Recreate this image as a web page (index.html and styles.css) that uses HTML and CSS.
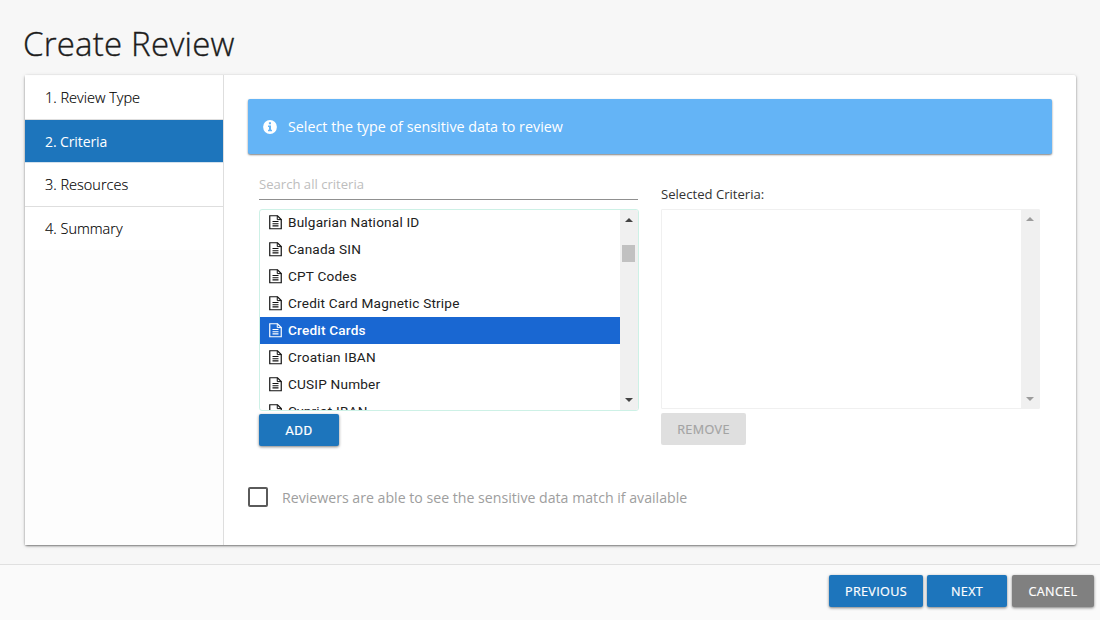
FILE: index.html
```
<!DOCTYPE html>
<html lang="en">
<head>
<meta charset="utf-8">
<title>Create Review</title>
<link rel="stylesheet" href="styles.css">
</head>
<body>
<svg class="defs" width="0" height="0" aria-hidden="true">
  <symbol id="doc" viewBox="0 0 13 15">
    <path d="M.75.75H8.5L12.25 4.5V13.75H.75Z" fill="none" stroke="currentColor" stroke-width="1.2"/>
    <path d="M8.25.75V4.6H12.25" fill="none" stroke="currentColor" stroke-width="1"/>
    <path d="M3.5 6.5H9.5M3.5 8.7H9.5M3.5 10.9H9.5" stroke="currentColor" stroke-width="1.1"/>
  </symbol>
</svg>
<main class="page">
  <h1 class="title"><span>Create Review</span></h1>
  <section class="card">
    <nav class="steps">
      <a class="step"><span>1. Review Type</span></a>
      <a class="step active"><span>2. Criteria</span></a>
      <a class="step"><span>3. Resources</span></a>
      <a class="step last"><span>4. Summary</span></a>
    </nav>
    <div class="content">
      <div class="banner">
        <svg class="info" viewBox="0 0 14 14"><circle cx="7" cy="7" r="6.9" fill="#fff"/><path d="M5.9 2.3H8V4.2H5.9ZM5 5.4H8V9.8H9V11.3H5V9.8H6V6.9H5Z" fill="#64b4f6"/></svg>
        <span>Select the type of sensitive data to review</span>
      </div>
      <div class="picker">
        <div class="column">
          <div class="search"><span>Search all criteria</span></div>
          <div class="list">
            <ul class="items">
              <li><svg><use href="#doc"/></svg><span>Bulgarian National ID</span></li>
              <li><svg><use href="#doc"/></svg><span>Canada SIN</span></li>
              <li><svg><use href="#doc"/></svg><span>CPT Codes</span></li>
              <li><svg><use href="#doc"/></svg><span>Credit Card Magnetic Stripe</span></li>
              <li class="selected"><svg><use href="#doc"/></svg><span>Credit Cards</span></li>
              <li><svg><use href="#doc"/></svg><span>Croatian IBAN</span></li>
              <li><svg><use href="#doc"/></svg><span>CUSIP Number</span></li>
              <li><svg><use href="#doc"/></svg><span>Cypriot IBAN</span></li>
            </ul>
            <div class="scrollbar"><i class="up"></i><i class="thumb"></i><i class="down"></i></div>
          </div>
          <button class="btn add"><span>ADD</span></button>
        </div>
        <div class="column">
          <div class="label"><span>Selected Criteria:</span></div>
          <div class="list empty">
            <div class="items"></div>
            <div class="scrollbar"><i class="up"></i><i class="down"></i></div>
          </div>
          <button class="btn remove"><span>REMOVE</span></button>
        </div>
      </div>
      <label class="check"><i class="box"></i><span>Reviewers are able to see the sensitive data match if available</span></label>
    </div>
  </section>
</main>
<footer class="footer">
  <button class="btn previous"><span>PREVIOUS</span></button>
  <button class="btn next"><span>NEXT</span></button>
  <button class="btn cancel"><span>CANCEL</span></button>
</footer>
</body>
</html>
```
FILE: styles.css
```
* { box-sizing: border-box; }
body {
  margin: 0; width: 1100px; height: 620px; overflow: hidden;
  display: flex; flex-direction: column;
  background: #f7f7f7; color: #212121;
  font-family: "Open Sans", "Noto Sans", sans-serif; font-size: 14px;
}
.defs { display: none; }
span { white-space: nowrap; }
.page { height: 564px; padding: 0 24px 0 25px; }
.title {
  margin: 0 0 0 -2px; height: 75px; padding-top: 20px;
  font-size: 33px; line-height: 48px; font-weight: 300; letter-spacing: 0.2px; color: #1c1c1c;
  -webkit-text-stroke: .35px #1c1c1c;
}
.card {
  display: flex; height: 470px; background: #fff; border-radius: 2px;
  box-shadow: 0 1px 2px rgba(0,0,0,.45), 0 1px 4px rgba(0,0,0,.15);
}
.steps { width: 199px; border-right: 1px solid #dedede; background: #fdfdfd; padding-top: 1px; }
.step {
  display: flex; align-items: center; height: 44px; padding-left: 20px;
  background: #fff; border-bottom: 1px solid #dedede; font-size: 14.5px; font-weight: 300; color: #000;
  -webkit-text-stroke: .15px #000;
}
.step.active {
  height: 43px; background: #1d75bc; color: #fff; border-bottom-color: #d3e1ed;
  font-size: 14px; font-weight: 400; letter-spacing: -.1px; -webkit-text-stroke: 0;
}
.step.last { height: 43px; border-bottom: 0; }
.content { flex: 1; padding: 24px 24px 0; }
.banner {
  display: flex; align-items: center; gap: 11px; height: 55px; padding-left: 15px;
  background: #64b4f6; color: #fff; border-radius: 2px; font-size: 14.3px;
  box-shadow: 0 1px 2px rgba(0,0,0,.5);
}
.info { width: 14px; height: 14px; }
.picker { display: flex; gap: 22px; padding: 14px 0 0 11px; }
.column { width: 380px; }
.search {
  height: 32px; width: 379px; border-bottom: 1px solid #909090; margin-bottom: 9px;
  font-size: 13.1px; line-height: 33px; color: #bdbdbd;
}
.label { height: 41px; line-height: 53px; font-size: 13.1px; color: #333; }
.list {
  display: flex; height: 202px; border: 1px solid #cdf1e6; border-radius: 3px; overflow: hidden; background: #fff;
}
.list.empty { width: 379px; height: 200px; border-color: #f0f0f0; border-radius: 1px; }
.items { flex: 1; margin: -1px 0 0; padding: 0; list-style: none; font-family: Roboto, sans-serif; font-size: 13.6px; }
.items li { display: flex; align-items: center; gap: 6px; height: 27px; padding: 0 0 1px 9px; letter-spacing: .2px; }
.items svg { width: 13px; height: 15px; color: #111; }
.items .selected { background: #1967d2; color: #fff; font-weight: 500; }
.selected svg { color: #fff; }
.scrollbar { width: 18px; background: #f0f0f0; display: flex; flex-direction: column; align-items: center; padding: 8px 1px 8px 0; }
.up { border: 4px solid transparent; border-top: 0; border-bottom: 4px solid #444; }
.down { border: 4px solid transparent; border-bottom: 0; border-top: 4px solid #444; margin-top: auto; }
.thumb { width: 13px; height: 17px; margin-top: 23px; background: #c1c1c1; }
.empty .scrollbar { padding: 7px 0 7px; }
.empty .up { border-bottom-color: #9c9c9c; }
.empty .down { border-top-color: #9c9c9c; }
.btn {
  display: flex; align-items: center; justify-content: center; height: 32px; padding: 0;
  border: 0; border-radius: 2px; background: #1d75bc; color: #fff;
  font-family: "Open Sans", sans-serif; font-size: 12.6px; letter-spacing: .35px; box-shadow: 0 1px 3px rgba(0,0,0,.5);
  -webkit-text-stroke: .2px currentColor;
}
.add { width: 80px; margin-top: 3px; font-family: Roboto, sans-serif; font-size: 13.3px; letter-spacing: .5px; }
.remove { width: 85px; margin-top: 4px; background: #dfdfdf; color: #a3a3a3; box-shadow: none; }
.check { display: flex; align-items: center; gap: 14px; margin-top: 41px; height: 20px; color: #9e9e9e; font-size: 14.15px; }
.box { width: 20px; height: 20px; border: 2px solid #5a5a5a; border-radius: 2px; }
.footer {
  height: 56px; border-top: 1px solid #e0e0e0; background: #fafafa;
  display: flex; justify-content: flex-end; padding: 10px 6px 0 0;
}
.previous { width: 94px; margin-right: 4px; }
.next { width: 80px; margin-right: 5px; }
.cancel { width: 82px; background: #808080; }
```
